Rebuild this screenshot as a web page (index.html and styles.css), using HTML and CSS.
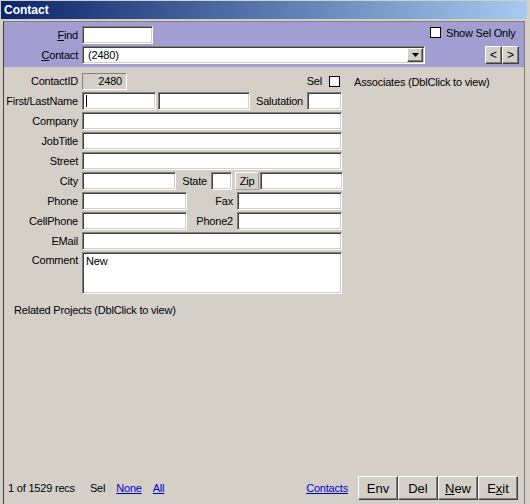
FILE: index.html
```html
<!DOCTYPE html>
<html>
<head>
<meta charset="utf-8">
<link rel="stylesheet" href="styles.css">
</head>
<body>
<div class="window">
  <div class="titlebar">Contact</div>
  <div class="frame">
    <div class="header">
      <div class="hrow">
        <label class="lbl"><u>F</u>ind</label>
        <div class="field w-find"></div>
        <div class="showsel">
          <span class="chk"></span>
          <span>Show Sel Only</span>
        </div>
      </div>
      <div class="hrow">
        <label class="lbl"><u>C</u>ontact</label>
        <div class="field select">
          <span class="seltext">(2480)</span>
          <span class="dropbtn"><svg width="7" height="4" viewBox="0 0 7 4"><path d="M0 0H7L3.5 4Z" fill="#000"/></svg></span>
        </div>
        <div class="nav">
          <span class="btn navbtn">&lt;</span>
          <span class="btn navbtn">&gt;</span>
        </div>
      </div>
    </div>

    <div class="body">
      <div class="form">
        <div class="row">
          <label class="lbl">ContactID</label>
          <div class="field ro w-id">2480</div>
          <div class="selgrp">
            <span>Sel</span>
            <span class="chk"></span>
          </div>
        </div>
        <div class="row">
          <label class="lbl">First/LastName</label>
          <div class="field w-first"><span class="caret"></span></div>
          <div class="field w-last"></div>
          <label class="lbl2 w-sal">Salutation</label>
          <div class="field w-salin"></div>
        </div>
        <div class="row">
          <label class="lbl">Company</label>
          <div class="field w-full"></div>
        </div>
        <div class="row">
          <label class="lbl">JobTitle</label>
          <div class="field w-full"></div>
        </div>
        <div class="row">
          <label class="lbl">Street</label>
          <div class="field w-full"></div>
        </div>
        <div class="row">
          <label class="lbl">City</label>
          <div class="field w-city"></div>
          <label class="lbl2 w-state">State</label>
          <div class="field w-statein"></div>
          <span class="zipbtn">Zip</span>
          <div class="field w-zip"></div>
        </div>
        <div class="row">
          <label class="lbl">Phone</label>
          <div class="field w-half"></div>
          <label class="lbl2 w-fax">Fax</label>
          <div class="field w-half"></div>
        </div>
        <div class="row">
          <label class="lbl">CellPhone</label>
          <div class="field w-half"></div>
          <label class="lbl2 w-fax">Phone2</label>
          <div class="field w-half"></div>
        </div>
        <div class="row">
          <label class="lbl">EMail</label>
          <div class="field w-full"></div>
        </div>
        <div class="row row-comment">
          <label class="lbl">Comment</label>
          <div class="field w-full comment">New</div>
        </div>
      </div>
      <div class="assoc">Associates (DblClick to view)</div>
    </div>

    <div class="related">Related Projects (DblClick to view)</div>

    <div class="footer">
      <span class="recs">1 of 1529 recs</span>
      <span class="sel">Sel</span>
      <a class="link">None</a>
      <a class="link">All</a>
      <a class="link contacts">Contacts</a>
      <div class="buttons">
        <span class="btn fbtn">Env</span>
        <span class="btn fbtn">Del</span>
        <span class="btn fbtn"><u>N</u>ew</span>
        <span class="btn fbtn">E<u>x</u>it</span>
      </div>
    </div>
  </div>
</div>
</body>
</html>
```

FILE: styles.css
```css
* { box-sizing: border-box; }
html, body { margin: 0; padding: 0; }
body {
  background: #d4d0c8;
  font-family: "Liberation Sans", Arial, sans-serif;
  font-size: 11px;
  letter-spacing: -0.2px;
  color: #000;
}
.window {
  width: 530px;
  height: 504px;
  display: flex;
  flex-direction: column;
  overflow: hidden;
}
.titlebar {
  margin: 1px 3px 0 1px;
  height: 18px;
  background: linear-gradient(to right, #0a246a, #a6caf0);
  color: #fff;
  font-weight: bold;
  font-size: 12px;
  letter-spacing: 0;
  line-height: 18px;
  padding-left: 3px;
}
.frame {
  margin: 2px 5px 0 3px;
  flex: 1;
  border-left: 1px solid #404040;
  border-top: 1px solid #808080;
  border-right: 1px solid #808080;
  display: flex;
  flex-direction: column;
}
.header {
  background: #a29ed2;
  padding: 4px 0 3px 0;
}
.hrow {
  display: flex;
  align-items: center;
  height: 18px;
}
.hrow + .hrow { margin-top: 2px; }
.lbl {
  width: 74px;
  margin-right: 4px;
  text-align: right;
  white-space: nowrap;
}
.lbl2 {
  text-align: right;
  padding-right: 4px;
  white-space: nowrap;
}
.field {
  height: 18px;
  background: #fff;
  border: 1px solid;
  border-color: #808080 #fff #fff #808080;
  box-shadow: inset 1px 1px #404040, inset -1px -1px #d4d0c8;
  position: relative;
}
.w-find { width: 71px; }
.showsel {
  margin-left: auto;
  width: 94px;
  display: flex;
  align-items: center;
  gap: 5px;
  margin-top: -5px;
}
.chk {
  display: inline-block;
  width: 11px;
  height: 11px;
  background: #fff;
  border: 1px solid #000;
}
.select {
  width: 343px;
  display: flex;
  align-items: center;
  padding-left: 5px;
}
.seltext { flex: 1; }
.dropbtn {
  width: 16px;
  height: 14px;
  margin-right: 1px;
  background: #d4d0c8;
  border: 1px solid;
  border-color: #fff #404040 #404040 #fff;
  box-shadow: inset -1px -1px #808080;
  display: flex;
  align-items: center;
  justify-content: center;
}
.nav {
  margin-left: auto;
  margin-right: 5px;
  display: flex;
}
.btn {
  background: #d4d0c8;
  border: 1px solid;
  border-color: #fff #404040 #404040 #fff;
  box-shadow: inset -1px -1px #808080;
  display: flex;
  align-items: center;
  justify-content: center;
}
.navbtn {
  width: 17px;
  height: 18px;
  font-size: 12px;
}
.body {
  display: flex;
  padding-top: 5px;
}
.form {
  width: 339px;
}
.row {
  display: flex;
  align-items: center;
  height: 18px;
  margin-bottom: 2px;
}
.row-comment { height: 42px; align-items: flex-start; }
.row-comment .lbl { padding-top: 2px; }
.w-id {
  width: 45px;
  height: 17px;
  background: #d4d0c8;
  box-shadow: none;
  text-align: right;
  padding-right: 4px;
  line-height: 15px;
}
.selgrp {
  margin-left: auto;
  margin-right: 3px;
  display: flex;
  align-items: center;
  gap: 7px;
}
.w-first { width: 74px; }
.w-last { width: 92px; margin-left: 2px; }
.w-sal { width: 57px; }
.w-salin { width: 35px; }
.w-full { width: 260px; }
.w-city { width: 94px; }
.w-state { width: 35px; }
.w-statein { width: 21px; }
.zipbtn {
  width: 24px;
  height: 18px;
  margin-left: 3px;
  margin-right: 1px;
  border: 1px solid;
  border-color: #fff #a0a0a0 #a0a0a0 #fff;
  display: flex;
  align-items: center;
  justify-content: center;
}
.w-zip { width: 83px; }
.w-half { width: 105px; }
.w-fax { width: 50px; }
.caret {
  position: absolute;
  left: 3px;
  top: 2px;
  width: 1px;
  height: 12px;
  background: #000;
}
.comment {
  height: 42px;
  padding: 2px 3px;
}
.assoc {
  margin-left: 11px;
  margin-top: 4px;
}
.related {
  margin-left: 10px;
  margin-top: 8px;
}
.footer {
  margin-top: auto;
  display: flex;
  align-items: center;
  padding: 0 6px 4px 4px;
}
.sel { margin-left: 15px; }
.link {
  color: #0000cc;
  text-decoration: underline;
  margin-left: 11px;
}
.contacts { margin-left: auto; }
.buttons {
  display: flex;
  margin-left: 10px;
}
.fbtn {
  width: 40px;
  height: 24px;
  font-size: 13px;
  letter-spacing: 0;
}
```
